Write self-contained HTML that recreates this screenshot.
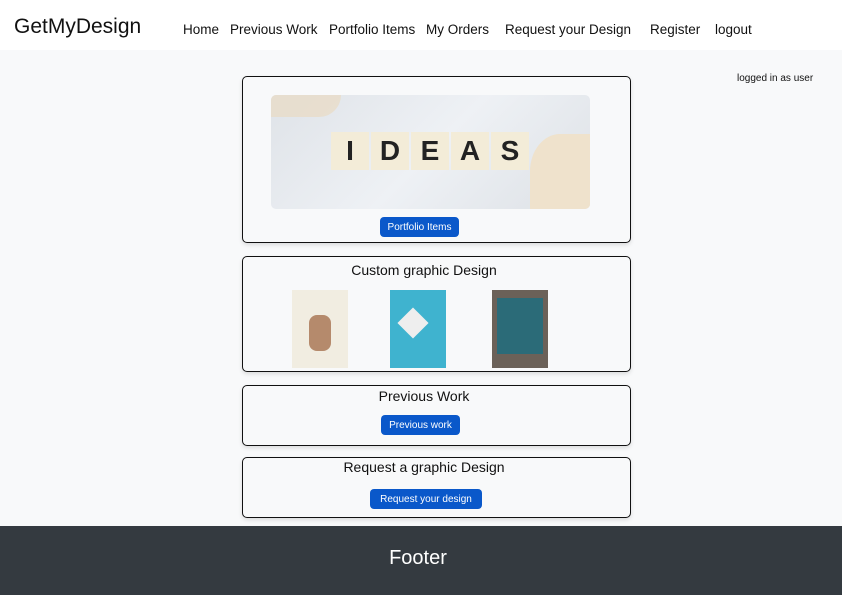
<!DOCTYPE html>
<html><head><style>
*{box-sizing:border-box;margin:0;padding:0}
body{width:842px;height:595px;overflow:hidden;background:#f8f9fa;font-family:"Liberation Sans",sans-serif;color:#111;position:relative}
.nav{position:absolute;left:0;top:0;width:842px;height:50px;background:#fff}
.brand{position:absolute;left:14px;top:15px;font-size:21px}
.nl{position:absolute;top:22px;font-size:13.5px}
.box{position:absolute;left:242px;width:389px;border:1px solid #111;border-radius:5px;box-shadow:0 2px 4px rgba(0,0,0,.12)}
.btn{position:absolute;background:#0a58ca;color:#fff;font-size:10px;border-radius:4px;text-align:center;line-height:21px;height:20px}
.t{position:absolute;left:0;width:362px;text-align:center;font-size:14px}
.abs{position:absolute}
</style></head><body>
<div class="nav">
<div class="brand">GetMyDesign</div>
<div class="nl" style="left:183px">Home</div>
<div class="nl" style="left:230px">Previous Work</div>
<div class="nl" style="left:329px">Portfolio Items</div>
<div class="nl" style="left:426px">My Orders</div>
<div class="nl" style="left:505px">Request your Design</div>
<div class="nl" style="left:650px">Register</div>
<div class="nl" style="left:715px">logout</div>
</div>
<div class="abs" style="left:737px;top:73px;font-size:10px">logged in as user</div>

<div class="box" style="top:76px;height:167px">
<div class="abs" style="left:28px;top:18px;width:319px;height:114px;border-radius:5px;background:linear-gradient(135deg,#dfe3e8,#eef1f5 50%,#dde1e6);overflow:hidden">
<div class="abs" style="left:0;top:0;width:70px;height:22px;background:#e8dcc8;border-radius:0 0 30px 0;opacity:.8"></div>
<div class="abs" style="right:0;bottom:0;width:60px;height:75px;background:#efe2cc;border-radius:50% 0 0 0"></div>
<div class="abs" style="left:60px;top:37px;display:flex;gap:2px">
<span style="width:38px;height:38px;background:#f3ecd8;font:bold 28px/38px 'Liberation Sans';text-align:center;color:#222">I</span>
<span style="width:38px;height:38px;background:#f3ecd8;font:bold 28px/38px 'Liberation Sans';text-align:center;color:#222">D</span>
<span style="width:38px;height:38px;background:#f3ecd8;font:bold 28px/38px 'Liberation Sans';text-align:center;color:#222">E</span>
<span style="width:38px;height:38px;background:#f3ecd8;font:bold 28px/38px 'Liberation Sans';text-align:center;color:#222">A</span>
<span style="width:38px;height:38px;background:#f3ecd8;font:bold 28px/38px 'Liberation Sans';text-align:center;color:#222">S</span>
</div></div>
<div class="btn" style="left:137px;top:140px;width:79px">Portfolio Items</div>
</div>

<div class="box" style="top:256px;height:116px">
<div class="t" style="top:5px">Custom graphic Design</div>
<div class="abs" style="left:49px;top:33px;width:56px;height:78px;background:#f1ede1"><div class="abs" style="left:17px;top:25px;width:22px;height:36px;background:#b58a6c;border-radius:8px"></div></div>
<div class="abs" style="left:147px;top:33px;width:56px;height:78px;background:#3fb3cf"><div class="abs" style="left:12px;top:22px;width:22px;height:22px;background:#eee;transform:rotate(45deg)"></div></div>
<div class="abs" style="left:249px;top:33px;width:56px;height:78px;background:#6b6158"><div class="abs" style="left:5px;top:8px;width:46px;height:56px;background:#2b6b78"></div></div>
</div>

<div class="box" style="top:385px;height:61px">
<div class="t" style="top:2px">Previous Work</div>
<div class="btn" style="left:138px;top:29px;width:79px">Previous work</div>
</div>

<div class="box" style="top:457px;height:61px">
<div class="t" style="top:1px">Request a graphic Design</div>
<div class="btn" style="left:127px;top:31px;width:112px">Request your design</div>
</div>

<div class="abs" style="left:0;top:526px;width:836px;height:69px;background:#343a40;color:#fff;text-align:center;font-size:20px;line-height:64px">Footer</div>
<div class="abs" style="left:836px;top:526px;width:6px;height:69px;background:#343a40"></div>
</body></html>
